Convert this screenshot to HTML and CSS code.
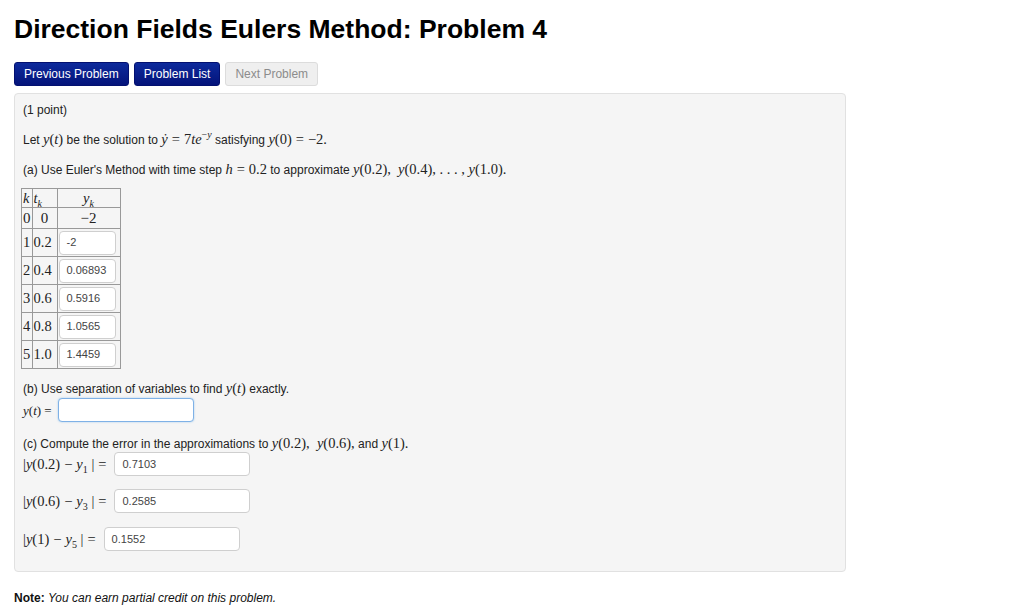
FILE: index.html
```html
<!DOCTYPE html>
<html>
<head>
<meta charset="utf-8">
<link rel="stylesheet" href="styles.css">
</head>
<body>
<div class="page">
  <h1 class="title">Direction Fields Eulers Method: Problem 4</h1>
  <div class="nav">
    <span class="btn btn-primary">Previous Problem</span>
    <span class="btn btn-primary">Problem List</span>
    <span class="btn btn-disabled">Next Problem</span>
  </div>
  <div class="panel">
    <p class="line">(1 point)</p>
    <p class="line">Let <span class="m"><i>y</i>(<i>t</i>)</span> be the solution to <span class="m"><i>ẏ</i><span class="op">=</span>7<i>te</i><sup>−<i>y</i></sup></span> satisfying <span class="m"><i>y</i>(0)<span class="op">=</span>−2.</span></p>
    <p class="line">(a) Use Euler's Method with time step <span class="m"><i>h</i><span class="op">=</span>0.2</span> to approximate <span class="m"><i>y</i>(0.2), &nbsp;<i>y</i>(0.4), . . . , <i>y</i>(1.0).</span></p>
    <table class="euler">
      <tr class="hdr"><td class="ck"><i>k</i></td><td class="ct"><i>t<sub>k</sub></i></td><td class="cy"><i>y<sub>k</sub></i></td></tr>
      <tr class="r0"><td class="ck">0</td><td class="ct c">0</td><td class="cy c">−2</td></tr>
      <tr class="ri"><td class="ck">1</td><td class="ct">0.2</td><td class="cy"><span class="inp small">-2</span></td></tr>
      <tr class="ri"><td class="ck">2</td><td class="ct">0.4</td><td class="cy"><span class="inp small">0.06893</span></td></tr>
      <tr class="ri"><td class="ck">3</td><td class="ct">0.6</td><td class="cy"><span class="inp small">0.5916</span></td></tr>
      <tr class="ri"><td class="ck">4</td><td class="ct">0.8</td><td class="cy"><span class="inp small">1.0565</span></td></tr>
      <tr class="ri"><td class="ck">5</td><td class="ct">1.0</td><td class="cy"><span class="inp small">1.4459</span></td></tr>
    </table>
    <p class="line partb">(b) Use separation of variables to find <span class="m"><i>y</i>(<i>t</i>)</span> exactly.</p>
    <div class="ansrow rb"><span class="m sm"><i>y</i>(<i>t</i>) =</span><span class="inp wide focus"></span></div>
    <p class="line partc">(c) Compute the error in the approximations to <span class="m"><i>y</i>(0.2), &nbsp;<i>y</i>(0.6),</span> and <span class="m"><i>y</i>(1).</span></p>
    <div class="ansrow r1"><span class="m">|<i>y</i>(0.2)<span class="op">−</span><i>y</i><sub>1</sub> |<span class="op">=</span></span><span class="inp wide">0.7103</span></div>
    <div class="ansrow r2"><span class="m">|<i>y</i>(0.6)<span class="op">−</span><i>y</i><sub>3</sub> |<span class="op">=</span></span><span class="inp wide">0.2585</span></div>
    <div class="ansrow r3"><span class="m">|<i>y</i>(1)<span class="op">−</span><i>y</i><sub>5</sub> |<span class="op">=</span></span><span class="inp wide">0.1552</span></div>
  </div>
  <p class="note"><b>Note:</b> <i>You can earn partial credit on this problem.</i></p>
</div>
</body>
</html>
```

FILE: styles.css
```css
html, body {
  margin: 0;
  padding: 0;
  background: #fff;
}
body {
  font-family: "Liberation Sans", Arial, sans-serif;
  font-size: 12px;
  color: #222;
}
.page {
  padding: 0 14px;
  width: 832px;
}
.title {
  margin: 0;
  padding-top: 13px;
  font-size: 26.5px;
  line-height: 32px;
  font-weight: bold;
  color: #000;
}
.nav {
  display: flex;
  gap: 5px;
  margin-top: 17px;
}
.btn {
  display: inline-flex;
  align-items: center;
  box-sizing: border-box;
  height: 24px;
  padding: 0 9px;
  border-radius: 3px;
  font-size: 12px;
  border: 1px solid;
}
.btn-primary {
  color: #fff;
  background: linear-gradient(#0d2a9c, #04137a);
  border-color: #031070;
}
.btn-disabled {
  color: #8c8c8c;
  background: #efefef;
  border-color: #dcdcdc;
}
.panel {
  margin-top: 7px;
  background: #f5f5f5;
  border: 1px solid #e1e1e1;
  border-radius: 4px;
  padding: 0 8px 20px 8px;
  height: 457px;
}
.line {
  margin: 0;
  line-height: 16px;
  padding-top: 8px;
  padding-bottom: 6px;
}
.m {
  font-family: "Liberation Serif", "Times New Roman", serif;
  font-size: 14.5px;
  line-height: 1;
}
.m sub, .m sup {
  font-size: 10px;
  line-height: 0;
}
.op { margin: 0 4px; }
.m.sm { font-size: 13px; }
.euler {
  border-collapse: collapse;
  margin-top: 4px;
  margin-left: -2px;
  font-family: "Liberation Serif", "Times New Roman", serif;
  font-size: 14.5px;
  border: 1px solid #777;
}
.euler td {
  border: 1px solid #999;
  padding: 0 1px;
  vertical-align: middle;
  line-height: 1;
}
.euler sub { font-size: 10px; line-height: 0; }
.ck { width: 7px; }
.ct { width: 22px; }
.cy { width: 60px; text-align: center; }
.c { text-align: center; }
.hdr td { height: 18px; }
.r0 td { height: 20px; font-size: 15px; }
.ri td { height: 27px; }
.ri .cy { text-align: left; padding-left: 1px; }
.inp {
  display: inline-flex;
  align-items: center;
  box-sizing: border-box;
  height: 24px;
  background: #fff;
  border: 1px solid #cfcfcf;
  border-radius: 4px;
  padding-left: 7px;
  font-family: "Liberation Sans", Arial, sans-serif;
  font-size: 11px;
  color: #444;
  vertical-align: middle;
}
.inp.small { width: 57px; }
.inp.wide { width: 136px; }
.inp.focus {
  border-color: #7fb1e6;
  box-shadow: 0 0 2px rgba(102, 175, 233, 0.6);
}
.partb { padding-top: 12px; padding-bottom: 1px; }
.ansrow {
  display: flex;
  align-items: center;
  gap: 4px;
  height: 24px;
}
.rb { margin-top: 0; gap: 6px; }
.partc { padding-top: 14px; padding-bottom: 0; }
.r1 { margin-top: 0; }
.r2 { margin-top: 13px; }
.r3 { margin-top: 14px; }
.note {
  margin: 19px 0 0 0;
  font-size: 12px;
  color: #111;
}
```
